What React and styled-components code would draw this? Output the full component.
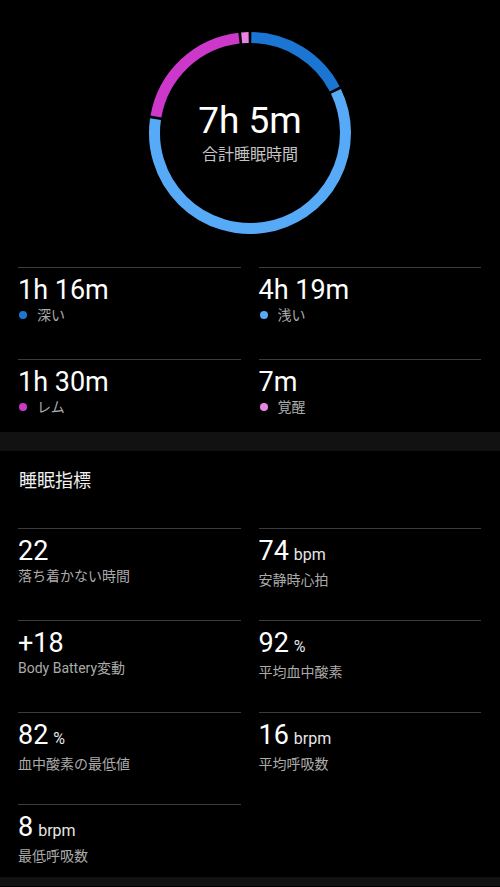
import React from 'react'
import styled, { createGlobalStyle } from 'styled-components'

const stages = [
  { key: 'deep', value: '1h 16m', label: '深い', minutes: 76, color: '#1b75d2' },
  { key: 'light', value: '4h 19m', label: '浅い', minutes: 259, color: '#57aaf7' },
  { key: 'rem', value: '1h 30m', label: 'レム', minutes: 90, color: '#cc38c9' },
  { key: 'awake', value: '7m', label: '覚醒', minutes: 7, color: '#ea82e2' },
]

const metrics = [
  { value: '22', label: '落ち着かない時間' },
  { value: '74', unit: 'bpm', label: '安静時心拍' },
  { value: '+18', label: 'Body Battery変動' },
  { value: '92', unit: '%', label: '平均血中酸素' },
  { value: '82', unit: '%', label: '血中酸素の最低値' },
  { value: '16', unit: 'brpm', label: '平均呼吸数' },
  { value: '8', unit: 'brpm', label: '最低呼吸数' },
]

const SIZE = 210
const C = SIZE / 2
const R = 95.5
const GAP = 0.8

const point = ( deg ) => {
  const rad = deg * Math.PI / 180
  return `${ ( C + R * Math.sin( rad ) ).toFixed( 2 ) } ${ ( C - R * Math.cos( rad ) ).toFixed( 2 ) }`
}

const arcPath = ( start, end ) => {
  const large = end - start > 180 ? 1 : 0
  return `M ${ point( start ) } A ${ R } ${ R } 0 ${ large } 1 ${ point( end ) }`
}

const SleepRing = () => {
  const total = stages.reduce( ( sum, s ) => sum + s.minutes, 0 )
  let acc = 0

  return (
    <svg width={ SIZE } height={ SIZE } viewBox={ `0 0 ${ SIZE } ${ SIZE }` }>
      { stages.map( s => {
        const start = acc / total * 360
        acc += s.minutes
        const end = acc / total * 360
        return (
          <path
            key={ s.key }
            d={ arcPath( start + GAP, end - GAP ) }
            fill="none"
            stroke={ s.color }
            strokeWidth="11"
          />
        )
      } ) }
    </svg>
  )
}

const App = () => {
  return (
    <Main>
      <GlobalStyle />

      <Hero>
        <RingStack>
          <SleepRing />
          <RingText>
            <TotalValue>7h 5m</TotalValue>
            <TotalLabel>合計睡眠時間</TotalLabel>
          </RingText>
        </RingStack>
      </Hero>

      <Grid>
        { stages.map( s => (
          <Cell key={ s.key }>
            <Value>{ s.value }</Value>
            <Label>
              <Dot color={ s.color } />
              { s.label }
            </Label>
          </Cell>
        ) ) }
      </Grid>

      <Band />

      <SectionTitle>睡眠指標</SectionTitle>

      <Grid>
        { metrics.map( m => (
          <Cell key={ m.label }>
            <Value>
              { m.value }
              { m.unit && <Unit>{ m.unit }</Unit> }
            </Value>
            <Label>{ m.label }</Label>
          </Cell>
        ) ) }
      </Grid>

      <BottomBand />
    </Main>
  )
}

export default App

const GlobalStyle = createGlobalStyle`
  html, body {
    margin: 0;
    padding: 0;
    background: #000;
  }

  body {
    font-family: Roboto, "Noto Sans CJK JP", sans-serif;
    color: #fff;
  }
`

const Main = styled.div`
  width: 500px;
  min-height: 887px;
  background: #000;
`

const Hero = styled.div`
  display: flex;
  justify-content: center;
  padding-top: 28px;
  height: 267px;
  box-sizing: border-box;
`

const RingStack = styled.div`
  display: grid;
  width: 210px;
  height: 210px;

  & > * {
    grid-area: 1 / 1;
  }
`

const RingText = styled.div`
  display: flex;
  flex-direction: column;
  align-items: center;
  padding-top: 73px;
`

const TotalValue = styled.span`
  font-size: 37px;
  line-height: 40px;
  font-weight: 400;
  color: #fff;
`

const TotalLabel = styled.span`
  margin-top: 3px;
  font-size: 16px;
  line-height: 22px;
  color: #c4c4c4;
`

const Grid = styled.div`
  display: grid;
  grid-template-columns: 1fr 1fr;
  column-gap: 18px;
  row-gap: 19px;
  padding: 0 19px 0 18px;
`

const Cell = styled.div`
  height: 73px;
  padding-top: 7px;
  box-sizing: border-box;
  border-top: 1px solid #3c3c3c;
`

const Value = styled.div`
  font-size: 27px;
  line-height: 30px;
  color: #fff;
  white-space: nowrap;
`

const Unit = styled.span`
  margin-left: 5px;
  font-size: 16px;
  color: #e6e6e6;
`

const Label = styled.div`
  display: flex;
  align-items: center;
  font-size: 14px;
  line-height: 20px;
  color: #ababab;
`

const Dot = styled.span`
  width: 8px;
  height: 8px;
  margin: 0 10px 0 1px;
  border-radius: 50%;
  background: ${ p => p.color };
`

const Band = styled.div`
  height: 19px;
  background: #121212;
`

const SectionTitle = styled.div`
  padding: 18px 19px 0;
  height: 77px;
  box-sizing: border-box;
  font-size: 18px;
  line-height: 24px;
  color: #f0f0f0;
`

const BottomBand = styled.div`
  height: 9px;
  background: #121212;
`
